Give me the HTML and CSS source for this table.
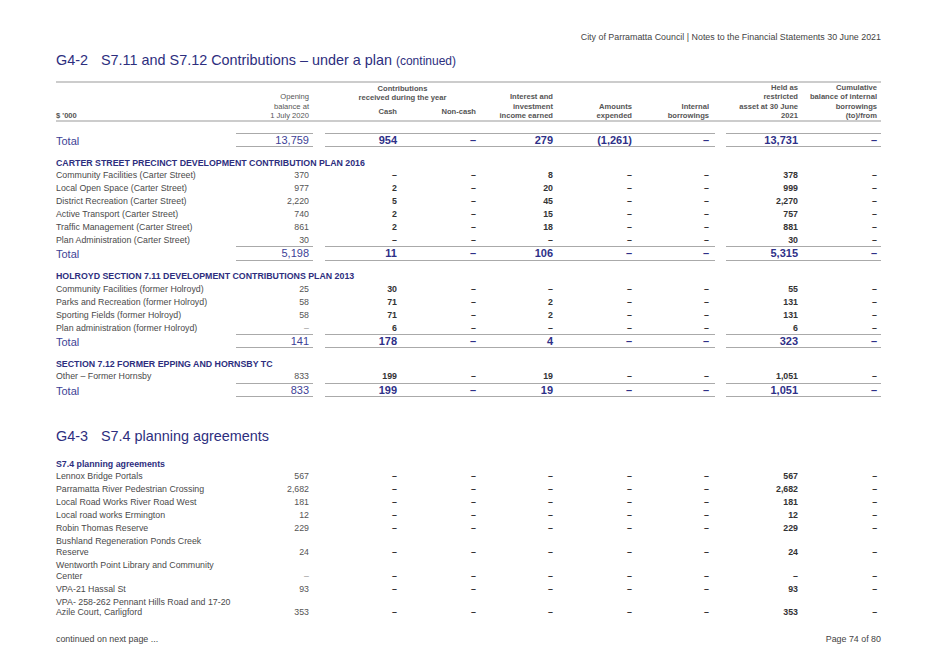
FILE: index.html
```html
<!DOCTYPE html>
<html lang="en">
<head>
<meta charset="utf-8">
<title>Notes to the Financial Statements</title>
<link rel="stylesheet" href="styles.css">
</head>
<body>
<div class="page">
  <div class="running">City of Parramatta Council | Notes to the Financial Statements 30 June 2021</div>

  <h1 class="title"><span class="tno">G4-2</span>S7.11 and S7.12 Contributions – under a plan <small>(continued)</small></h1>

  <table class="fin">
    <colgroup>
      <col class="c-label"><col class="c-open"><col class="c-gap"><col class="c-cash"><col class="c-non"><col class="c-int"><col class="c-amt"><col class="c-ib"><col class="c-gap2"><col class="c-held"><col class="c-cum">
    </colgroup>
    <thead>
      <tr class="h1">
        <th rowspan="2" class="lbl">$ '000</th>
        <th rowspan="2" class="reg">Opening<br>balance at<br>1 July 2020</th>
        <th rowspan="2" class="gap"></th>
        <th colspan="2" class="grp">Contributions<br>received during the year</th>
        <th rowspan="2">Interest and<br>investment<br>income earned</th>
        <th rowspan="2">Amounts<br>expended</th>
        <th rowspan="2" class="ib">Internal<br>borrowings</th>
        <th rowspan="2" class="gap"></th>
        <th rowspan="2">Held as<br>restricted<br>asset at 30 June<br>2021</th>
        <th rowspan="2">Cumulative<br>balance of internal<br>borrowings<br>(to)/from</th>
      </tr>
      <tr class="h2">
        <th class="sub">Cash</th>
        <th class="sub">Non-cash</th>
      </tr>
    </thead>
    <tbody>
      <tr class="spacer"><td colspan="11"></td></tr>
      <tr class="tot">
        <td class="lbl">Total</td><td class="o">13,759</td><td class="gap"></td><td>954</td><td>–</td><td>279</td><td>(1,261)</td><td class="ib">–</td><td class="gap"></td><td>13,731</td><td>–</td>
      </tr>

      <tr class="sec"><td colspan="11">CARTER STREET PRECINCT DEVELOPMENT CONTRIBUTION PLAN 2016</td></tr>
      <tr class="row"><td class="lbl">Community Facilities (Carter Street)</td><td class="o">370</td><td class="gap"></td><td>–</td><td>–</td><td>8</td><td>–</td><td class="ib">–</td><td class="gap"></td><td>378</td><td>–</td></tr>
      <tr class="row"><td class="lbl">Local Open Space (Carter Street)</td><td class="o">977</td><td class="gap"></td><td>2</td><td>–</td><td>20</td><td>–</td><td class="ib">–</td><td class="gap"></td><td>999</td><td>–</td></tr>
      <tr class="row"><td class="lbl">District Recreation (Carter Street)</td><td class="o">2,220</td><td class="gap"></td><td>5</td><td>–</td><td>45</td><td>–</td><td class="ib">–</td><td class="gap"></td><td>2,270</td><td>–</td></tr>
      <tr class="row"><td class="lbl">Active Transport (Carter Street)</td><td class="o">740</td><td class="gap"></td><td>2</td><td>–</td><td>15</td><td>–</td><td class="ib">–</td><td class="gap"></td><td>757</td><td>–</td></tr>
      <tr class="row"><td class="lbl">Traffic Management (Carter Street)</td><td class="o">861</td><td class="gap"></td><td>2</td><td>–</td><td>18</td><td>–</td><td class="ib">–</td><td class="gap"></td><td>881</td><td>–</td></tr>
      <tr class="row"><td class="lbl">Plan Administration (Carter Street)</td><td class="o">30</td><td class="gap"></td><td>–</td><td>–</td><td>–</td><td>–</td><td class="ib">–</td><td class="gap"></td><td>30</td><td>–</td></tr>
      <tr class="tot">
        <td class="lbl">Total</td><td class="o">5,198</td><td class="gap"></td><td>11</td><td>–</td><td>106</td><td>–</td><td class="ib">–</td><td class="gap"></td><td>5,315</td><td>–</td>
      </tr>

      <tr class="sec"><td colspan="11">HOLROYD SECTION 7.11 DEVELOPMENT CONTRIBUTIONS PLAN 2013</td></tr>
      <tr class="row"><td class="lbl">Community Facilities (former Holroyd)</td><td class="o">25</td><td class="gap"></td><td>30</td><td>–</td><td>–</td><td>–</td><td class="ib">–</td><td class="gap"></td><td>55</td><td>–</td></tr>
      <tr class="row"><td class="lbl">Parks and Recreation (former Holroyd)</td><td class="o">58</td><td class="gap"></td><td>71</td><td>–</td><td>2</td><td>–</td><td class="ib">–</td><td class="gap"></td><td>131</td><td>–</td></tr>
      <tr class="row"><td class="lbl">Sporting Fields (former Holroyd)</td><td class="o">58</td><td class="gap"></td><td>71</td><td>–</td><td>2</td><td>–</td><td class="ib">–</td><td class="gap"></td><td>131</td><td>–</td></tr>
      <tr class="row"><td class="lbl">Plan administration (former Holroyd)</td><td class="o dim">–</td><td class="gap"></td><td>6</td><td>–</td><td>–</td><td>–</td><td class="ib">–</td><td class="gap"></td><td>6</td><td>–</td></tr>
      <tr class="tot">
        <td class="lbl">Total</td><td class="o">141</td><td class="gap"></td><td>178</td><td>–</td><td>4</td><td>–</td><td class="ib">–</td><td class="gap"></td><td>323</td><td>–</td>
      </tr>

      <tr class="sec"><td colspan="11">SECTION 7.12 FORMER EPPING AND HORNSBY TC</td></tr>
      <tr class="row"><td class="lbl">Other – Former Hornsby</td><td class="o">833</td><td class="gap"></td><td>199</td><td>–</td><td>19</td><td>–</td><td class="ib">–</td><td class="gap"></td><td>1,051</td><td>–</td></tr>
      <tr class="tot">
        <td class="lbl">Total</td><td class="o">833</td><td class="gap"></td><td>199</td><td>–</td><td>19</td><td>–</td><td class="ib">–</td><td class="gap"></td><td>1,051</td><td>–</td>
      </tr>
    </tbody>
  </table>

  <h2 class="title t2"><span class="tno">G4-3</span>S7.4 planning agreements</h2>

  <table class="fin g43">
    <colgroup>
      <col class="c-label"><col class="c-open"><col class="c-gap"><col class="c-cash"><col class="c-non"><col class="c-int"><col class="c-amt"><col class="c-ib"><col class="c-gap2"><col class="c-held"><col class="c-cum">
    </colgroup>
    <tbody>
      <tr class="sec first"><td colspan="11">S7.4 planning agreements</td></tr>
      <tr class="row"><td class="lbl">Lennox Bridge Portals</td><td class="o">567</td><td class="gap"></td><td>–</td><td>–</td><td>–</td><td>–</td><td class="ib">–</td><td class="gap"></td><td>567</td><td>–</td></tr>
      <tr class="row"><td class="lbl">Parramatta River Pedestrian Crossing</td><td class="o">2,682</td><td class="gap"></td><td>–</td><td>–</td><td>–</td><td>–</td><td class="ib">–</td><td class="gap"></td><td>2,682</td><td>–</td></tr>
      <tr class="row"><td class="lbl">Local Road Works River Road West</td><td class="o">181</td><td class="gap"></td><td>–</td><td>–</td><td>–</td><td>–</td><td class="ib">–</td><td class="gap"></td><td>181</td><td>–</td></tr>
      <tr class="row"><td class="lbl">Local road works Ermington</td><td class="o">12</td><td class="gap"></td><td>–</td><td>–</td><td>–</td><td>–</td><td class="ib">–</td><td class="gap"></td><td>12</td><td>–</td></tr>
      <tr class="row"><td class="lbl">Robin Thomas Reserve</td><td class="o">229</td><td class="gap"></td><td>–</td><td>–</td><td>–</td><td>–</td><td class="ib">–</td><td class="gap"></td><td>229</td><td>–</td></tr>
      <tr class="row"><td class="lbl">Bushland Regeneration Ponds Creek<br>Reserve</td><td class="o">24</td><td class="gap"></td><td>–</td><td>–</td><td>–</td><td>–</td><td class="ib">–</td><td class="gap"></td><td>24</td><td>–</td></tr>
      <tr class="row"><td class="lbl">Wentworth Point Library and Community<br>Center</td><td class="o dim">–</td><td class="gap"></td><td>–</td><td>–</td><td>–</td><td>–</td><td class="ib">–</td><td class="gap"></td><td>–</td><td>–</td></tr>
      <tr class="row"><td class="lbl">VPA-21 Hassal St</td><td class="o">93</td><td class="gap"></td><td>–</td><td>–</td><td>–</td><td>–</td><td class="ib">–</td><td class="gap"></td><td>93</td><td>–</td></tr>
      <tr class="row"><td class="lbl">VPA- 258-262 Pennant Hills Road and 17-20<br>Azile Court, Carligford</td><td class="o">353</td><td class="gap"></td><td>–</td><td>–</td><td>–</td><td>–</td><td class="ib">–</td><td class="gap"></td><td>353</td><td>–</td></tr>
    </tbody>
  </table>

  <div class="footer">
    <span>continued on next page ...</span>
    <span>Page 74 of 80</span>
  </div>
</div>
</body>
</html>
```

FILE: styles.css
```css
* { box-sizing: border-box; }

html, body {
  margin: 0;
  background: #ffffff;
}

body {
  font-family: "Liberation Sans", Arial, Helvetica, sans-serif;
  color: #444444;
}

.page {
  width: 937px;
  padding: 31px 56px 0 56px;
}

.running {
  text-align: right;
  font-size: 8.9px;
  line-height: 12px;
  color: #444444;
}

.title {
  margin: 9px 0 0 0;
  font-size: 14.4px;
  line-height: 17px;
  font-weight: normal;
  color: #2d2e7e;
}

.title .tno {
  display: inline-block;
  margin-right: 13px;
}

.title small {
  font-size: 12px;
}

.title.t2 {
  margin-top: 31px;
}

/* ---------- table ---------- */
.fin {
  width: 825px;
  table-layout: fixed;
  border-collapse: separate;
  border-spacing: 0;
  margin-top: 11px;
}

.fin.g43 {
  margin-top: 3px;
}

.c-label { width: 180px; }
.c-open  { width: 77px; }
.c-gap   { width: 12px; }
.c-cash  { width: 76px; }
.c-non   { width: 79px; }
.c-int   { width: 77px; }
.c-amt   { width: 79px; }
.c-ib    { width: 79px; }
.c-gap2  { width: 11px; }
.c-held  { width: 76px; }
.c-cum   { width: 79px; }

/* header */
.fin th {
  font-size: 7.6px;
  line-height: 9.3px;
  font-weight: bold;
  color: #555555;
  text-align: right;
  vertical-align: bottom;
  padding: 0 4px 0 0;
  white-space: nowrap;
}

.fin th.reg {
  font-weight: normal;
}

.fin th.ib { padding-right: 6px; }

.fin tr.h1 th {
  border-top: 2px solid #cccccc;
}

.fin tr.h1 th[rowspan] {
  border-bottom: 2px solid #cccccc;
}

.fin th.lbl {
  text-align: left;
  padding-right: 0;
}

.fin th.gap { padding: 0; }

.fin th.grp {
  text-align: center;
  vertical-align: top;
  padding: 1px 0 0 0;
}

.fin tr.h2 { height: 19px; }

.fin th.sub {
  vertical-align: middle;
  border-bottom: 2px solid #cccccc;
}

/* body cells */
.fin td {
  padding: 1.8px 4px 0.4px 0;
  text-align: right;
  vertical-align: bottom;
  white-space: nowrap;
}

.fin td.ib { padding-right: 6px; }
.fin td.gap { padding: 0; }

.fin tr.spacer td {
  height: 10.5px;
  padding: 0;
}

/* data rows */
.fin tr.row td {
  font-size: 8.8px;
  line-height: 10.8px;
  font-weight: bold;
  color: #333333;
}

.fin tr.row td.lbl {
  text-align: left;
  font-weight: normal;
  color: #4a4a4a;
  padding-right: 0;
}

.fin tr.row td.o {
  font-weight: normal;
  color: #555555;
}

.fin tr.row td.o.dim {
  color: #999999;
}

/* section heading */
.fin tr.sec td {
  text-align: left;
  font-size: 8.8px;
  line-height: 10.8px;
  font-weight: bold;
  color: #2d2e7e;
  padding: 10.5px 0 0 0;
}

/* totals */
.fin tr.tot td {
  font-size: 11px;
  line-height: 12.4px;
  font-weight: bold;
  color: #2e3088;
  padding-top: 0;
  padding-bottom: 0;
  border-top: 1px solid #aaaaaa;
  border-bottom: 1.5px solid #aaaaaa;
}

.fin tr.tot td.lbl {
  text-align: left;
  font-weight: normal;
  color: #3d3f96;
  border: none;
}

.fin tr.tot td.o {
  font-weight: normal;
  color: #3d3f96;
}

.fin tr.tot td.gap {
  border: none;
}

/* footer */
.footer {
  display: flex;
  justify-content: space-between;
  margin-top: 14px;
  font-size: 8.9px;
  line-height: 12px;
  color: #444444;
}
```
